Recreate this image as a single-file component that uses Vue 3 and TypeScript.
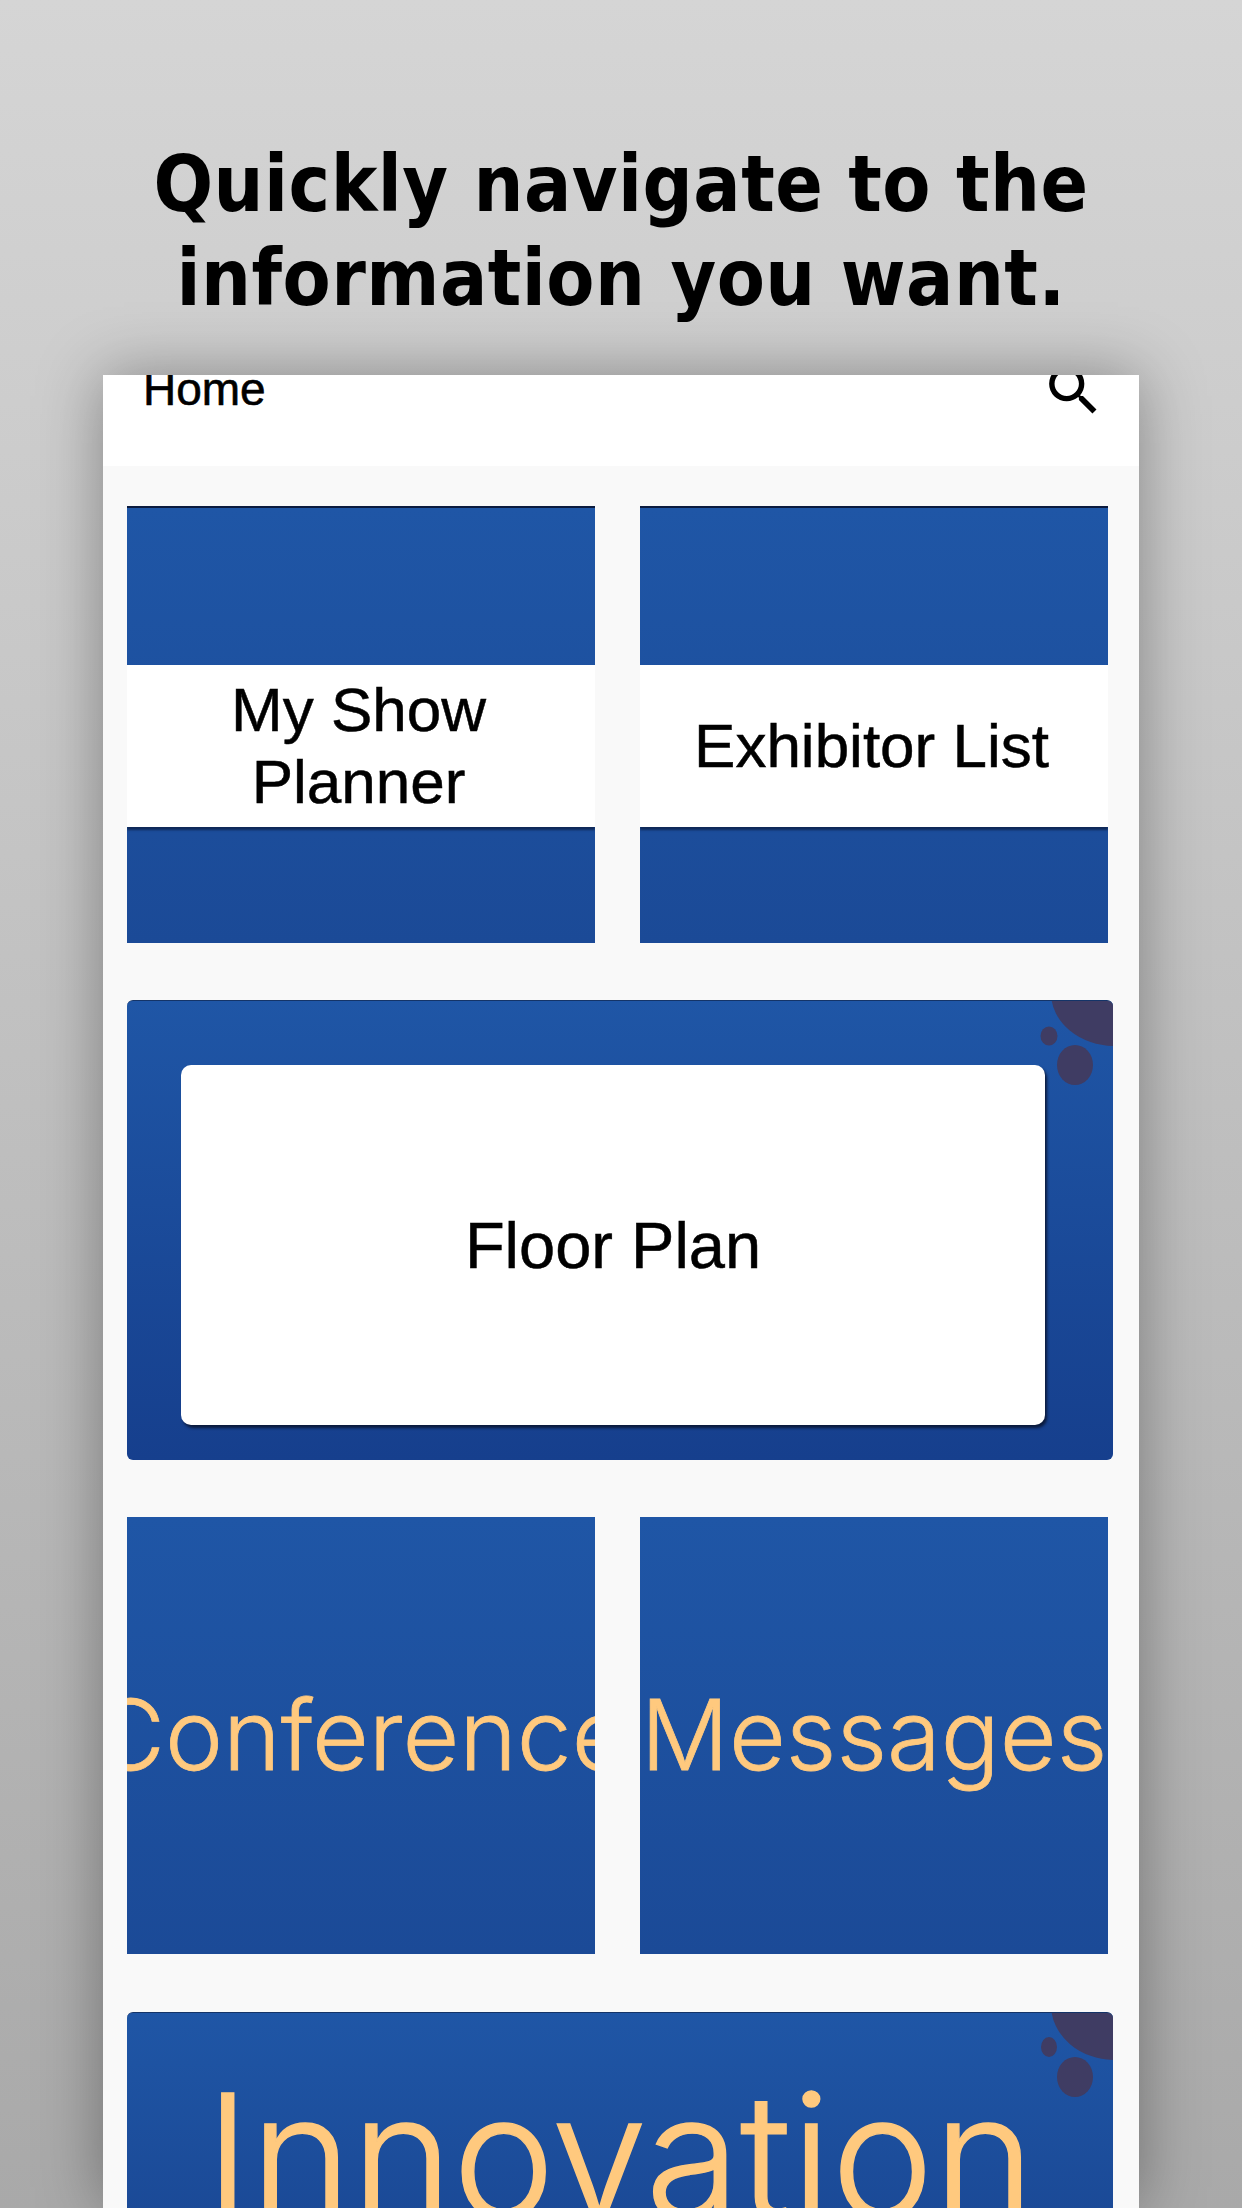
<script setup lang="ts">
const topTiles: string[][] = [['My Show', 'Planner'], ['Exhibitor List']]
const promoTiles: string[] = ['Conference', 'Messages']
</script>

<template>
  <div class="page">
    <h1 class="title">Quickly navigate to the<br />information you want.</h1>
    <main class="phone">
      <header class="bar">
        <span class="bar-title">Home</span>
        <svg class="search" viewBox="0 0 24 24" aria-hidden="true">
          <path d="M15.5 14h-.79l-.28-.27A6.47 6.47 0 0 0 16 9.5 6.5 6.5 0 1 0 9.5 16c1.61 0 3.09-.59 4.23-1.57l.27.28v.79l5 4.99L20.49 19l-4.99-5zm-6 0C7.01 14 5 11.99 5 9.5S7.01 5 9.5 5 14 7.01 14 9.5 11.99 14 9.5 14z" />
        </svg>
      </header>
      <section class="content">
        <div class="pair">
          <article v-for="(lines, i) in topTiles" :key="i" class="tile banded">
            <div class="band">
              <span v-for="line in lines" :key="line">{{ line }}</span>
            </div>
          </article>
        </div>
        <article class="wide floor">
          <svg class="blobs" viewBox="0 0 80 90" aria-hidden="true">
            <ellipse cx="82" cy="-8" rx="64" ry="53" />
            <ellipse cx="16" cy="35" rx="8.5" ry="9.5" />
            <ellipse cx="42" cy="64" rx="18" ry="20" />
          </svg>
          <div class="panel">Floor Plan</div>
        </article>
        <div class="pair">
          <article v-for="name in promoTiles" :key="name" class="tile promo">
            <span class="promo-text">{{ name }}</span>
          </article>
        </div>
        <article class="wide innovation">
          <svg class="blobs" viewBox="0 0 80 90" aria-hidden="true">
            <ellipse cx="82" cy="-8" rx="64" ry="55" />
            <ellipse cx="16" cy="34" rx="8" ry="10" />
            <ellipse cx="42" cy="64" rx="18" ry="20" />
          </svg>
          <span class="innovation-text">Innovation</span>
        </article>
      </section>
    </main>
  </div>
</template>

<style scoped>
.page {
  width: 1242px;
  height: 2208px;
  overflow: hidden;
  display: flex;
  flex-direction: column;
  align-items: center;
  background: linear-gradient(180deg, #d5d5d5 0%, #a9a9a9 100%);
}
.title {
  margin: 0;
  padding-top: 137px;
  height: 375px;
  box-sizing: border-box;
  font-family: "DejaVu Sans Condensed", "DejaVu Sans", sans-serif;
  font-stretch: condensed;
  font-size: 78px;
  line-height: 94px;
  font-weight: 700;
  letter-spacing: 0.5px;
  text-align: center;
  color: #000;
}
.phone {
  width: 1036px;
  flex: 1;
  background: #f9f9f9;
  box-shadow: 0 0 60px rgba(0, 0, 0, 0.35);
  overflow: hidden;
}
.bar {
  height: 91px;
  background: #fff;
  display: flex;
  justify-content: space-between;
  align-items: flex-start;
  padding: 0 33px 0 40px;
  overflow: hidden;
}
.bar-title {
  margin-top: -12px;
  font-family: "Liberation Sans", sans-serif;
  font-size: 46px;
  line-height: 52px;
  color: #000;
  -webkit-text-stroke: 0.6px #000;
}
.search {
  width: 65px;
  height: 65px;
  margin-top: -17px;
  fill: #000;
}
.content {
  display: flex;
  flex-direction: column;
  gap: 57px;
  padding: 40px 26px 0 24px;
}
.pair {
  display: grid;
  grid-template-columns: 468px 468px;
  column-gap: 45px;
}
.tile {
  height: 437px;
  background: linear-gradient(180deg, #1f56a6 0%, #1b4a97 100%);
  overflow: hidden;
}
.banded {
  border-top: 2px solid #0b1b3f;
  padding-top: 157px;
  box-sizing: border-box;
}
.band {
  height: 162px;
  padding-right: 5px;
  background: #fff;
  box-shadow: 0 3px 2px rgba(10, 25, 60, 0.7);
  display: flex;
  flex-direction: column;
  align-items: center;
  justify-content: center;
  font-family: "Liberation Sans", sans-serif;
  font-size: 62px;
  line-height: 72px;
  color: #000;
  -webkit-text-stroke: 0.5px #000;
}
.wide {
  position: relative;
  width: 986px;
  background: linear-gradient(180deg, #1f56a6 0%, #163f8d 100%);
  border-radius: 6px;
  overflow: hidden;
}
.blobs {
  position: absolute;
  top: 0;
  right: 0;
  width: 80px;
  height: 90px;
  fill: #3f3c63;
}
.floor {
  height: 460px;
  padding: 64px 68px 35px 54px;
  box-sizing: border-box;
  border-top: 1px solid #143468;
}
.panel {
  height: 360px;
  background: #fff;
  border-radius: 10px;
  box-shadow: 2px 3px 3px #0b1a3c;
  display: flex;
  align-items: center;
  justify-content: center;
  font-family: "Liberation Sans", sans-serif;
  font-size: 65px;
  color: #000;
  -webkit-text-stroke: 0.5px #000;
}
.promo {
  display: flex;
  align-items: flex-start;
  justify-content: center;
}
.promo-text {
  margin-top: 153px;
  font-family: "Inter", sans-serif;
  font-weight: 300;
  font-size: 98px;
  line-height: 130px;
  color: #ffc97e;
  white-space: nowrap;
  -webkit-text-stroke: 0.8px #ffc97e;
}
.innovation {
  height: 300px;
  margin-top: 1px;
  display: flex;
  justify-content: center;
  border-top: 1px solid #143468;
  background: linear-gradient(180deg, #1f56a6 0%, #1b4a97 65%);
}
.innovation-text {
  margin-top: 47px;
  font-family: "Inter", sans-serif;
  font-weight: 300;
  font-size: 172px;
  line-height: 190px;
  color: #ffc97e;
  white-space: nowrap;
  -webkit-text-stroke: 1.4px #ffc97e;
}
</style>
